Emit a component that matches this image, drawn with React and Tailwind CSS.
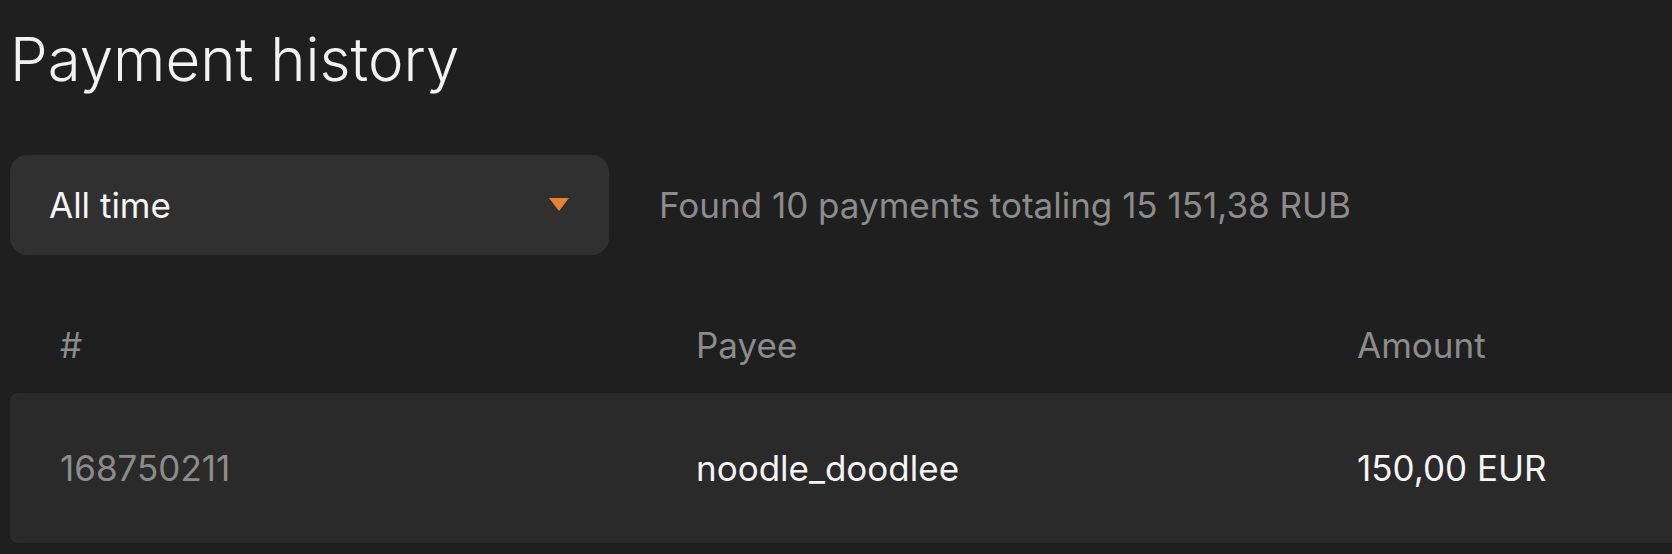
export default function App() {
  const rows = [{ id: '168750211', payee: 'noodle_doodlee', amount: '150,00 EUR' }]

  return (
    <div
      className="h-[554px] w-[1672px] overflow-hidden bg-[#1f1f1f] pl-[10px] text-white"
      style={{ fontFamily: 'Inter, "Noto Sans", sans-serif' }}
    >
      <h1 className="pt-[29px] text-[60px] leading-none font-light text-[#f2f2f2]">
        Payment history
      </h1>

      <div className="mt-[66px] flex items-center gap-[50px]">
        <button className="flex h-[100px] w-[599px] items-center justify-between rounded-[17px] bg-[#303030] pr-[40px] pl-[39px]">
          <span className="text-[35px] text-[#f5f5f5]">All time</span>
          <svg width="20" height="14" viewBox="0 0 20 14">
            <path d="M0 0 H20 L10 13 Z" fill="#e8822f" />
          </svg>
        </button>
        <span className="text-[35px] text-[#8c8c8c]">Found 10 payments totaling 15 151,38 RUB</span>
      </div>

      <div className="mt-[42px] w-[2200px]">
        <div className="flex h-[96px] items-center text-[35px] text-[#8c8c8c]">
          <div className="w-[686px] pl-[50px]">#</div>
          <div className="w-[661px]">Payee</div>
          <div className="flex-1">Amount</div>
        </div>
        {rows.map((r) => (
          <div key={r.id} className="flex h-[150px] items-center rounded-[8px] bg-[#2a2a2a] text-[35px]">
            <div className="w-[686px] pl-[50px] text-[#8c8c8c]">{r.id}</div>
            <div className="w-[661px] text-[#f5f5f5]">{r.payee}</div>
            <div className="flex-1 text-[#f5f5f5]">{r.amount}</div>
          </div>
        ))}
      </div>
    </div>
  )
}
